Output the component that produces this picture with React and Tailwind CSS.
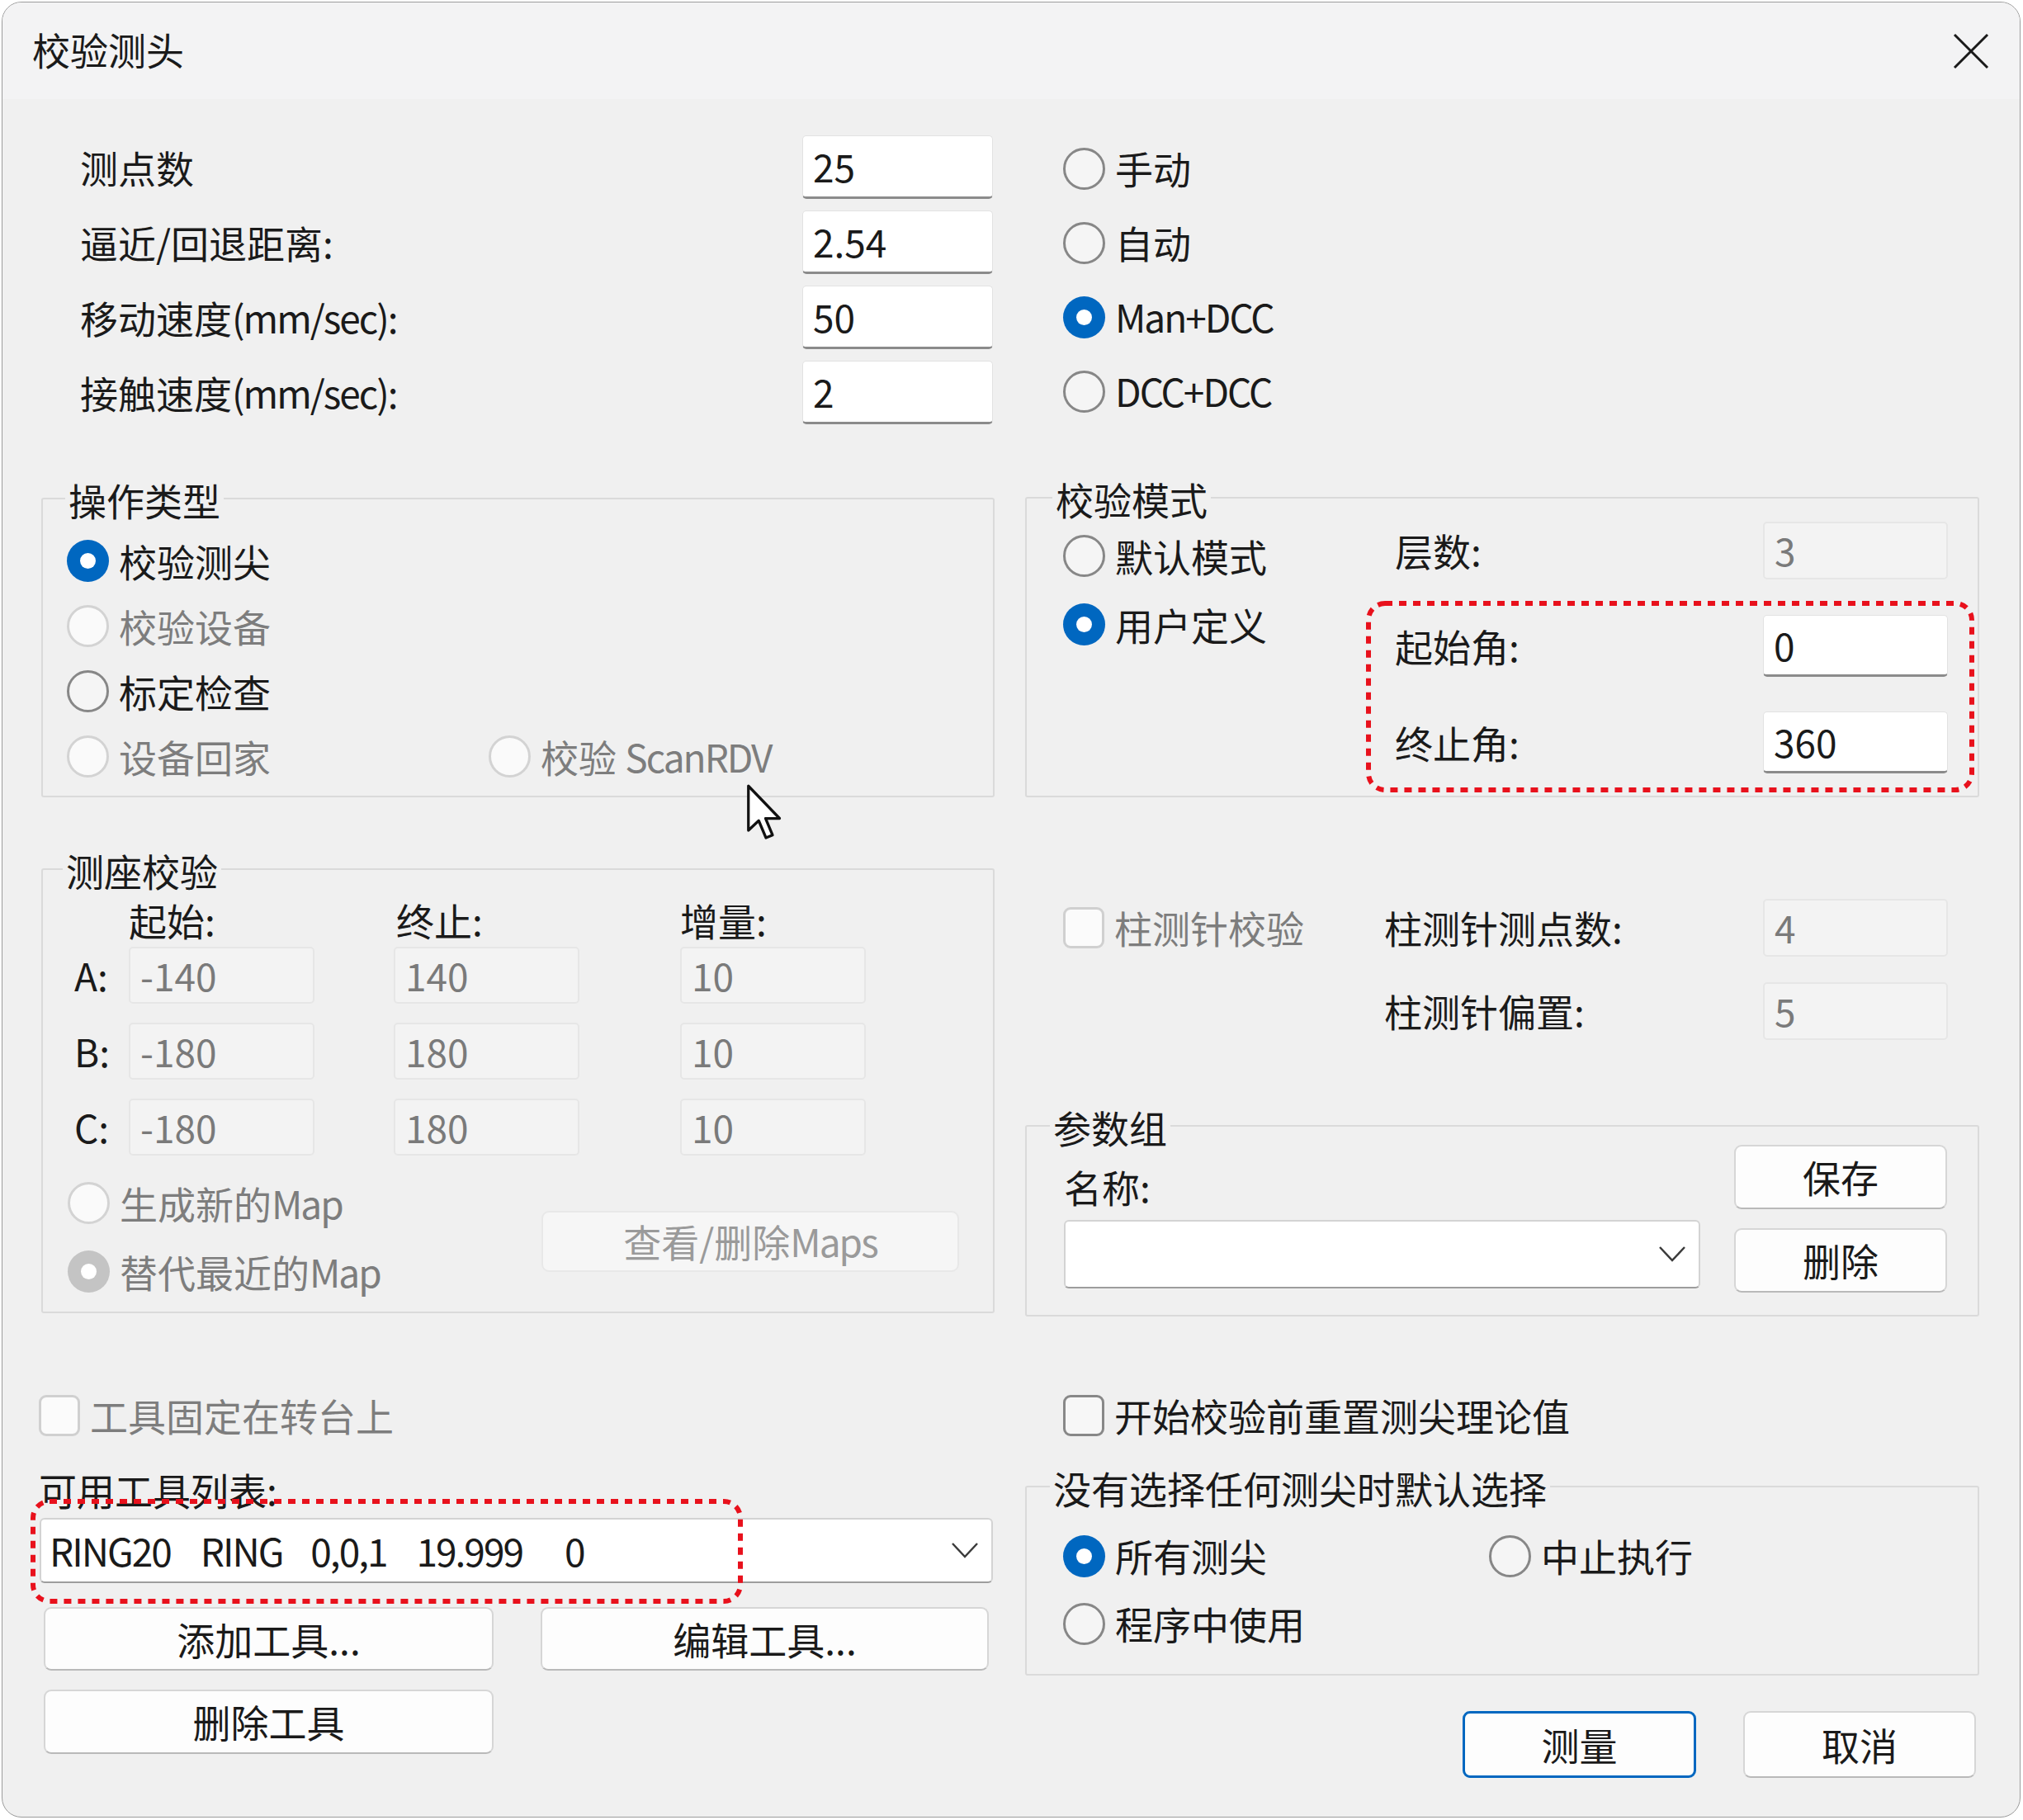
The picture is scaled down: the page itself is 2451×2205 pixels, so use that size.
import React from 'react';

// Windows 11 style "校验测头" dialog

// latin runs in the reference font are narrower than Noto's, pull them in a bit
function L({ children }) {
  return <span className="tracking-[-2px]">{children}</span>;
}

function Radio({ checked = false, disabled = false }) {
  if (checked) {
    return (
      <span
        className={`flex h-[51px] w-[51px] shrink-0 items-center justify-center rounded-full ${
          disabled ? 'bg-[#c4c4c4]' : 'bg-[#0067c0]'
        }`}
      >
        <span className="h-[19px] w-[19px] rounded-full bg-white" />
      </span>
    );
  }
  return (
    <span
      className={`h-[51px] w-[51px] shrink-0 rounded-full border-[3px] ${
        disabled ? 'border-[#d3d3d3] bg-[#fafafa]' : 'border-[#878787] bg-[#f5f5f5]'
      }`}
    />
  );
}

function Option({ text, checked, disabled }) {
  return (
    <div className="flex items-center gap-[12px]">
      <Radio checked={checked} disabled={disabled} />
      <span className={disabled ? 'text-[#7d7d7d]' : ''}>{text}</span>
    </div>
  );
}

function Check({ text, disabled = false }) {
  return (
    <div className="flex items-center gap-[12px]">
      <span
        className={`h-[50px] w-[50px] shrink-0 rounded-[9px] border-[3px] ${
          disabled ? 'border-[#d0d0d0] bg-[#fbfbfb]' : 'border-[#888888] bg-[#f7f7f7]'
        }`}
      />
      <span className={disabled ? 'text-[#7d7d7d]' : ''}>{text}</span>
    </div>
  );
}

function Field({ value, className = '' }) {
  return (
    <div
      className={`flex items-center rounded-[5px] border border-[#e2e2e2] border-b-[3px] border-b-[#8b8b8b] bg-white pl-[12px] ${className}`}
    >
      {value}
    </div>
  );
}

function OffField({ value, className = '' }) {
  return (
    <div
      className={`flex items-center rounded-[5px] border-2 border-[#e6e6e6] bg-[#f3f3f3] pl-[12px] text-[#7a7a7a] ${className}`}
    >
      {value}
    </div>
  );
}

function Btn({ children, className = '', primary = false, disabled = false }) {
  const tone = primary
    ? 'border-[3px] border-[#0067c0] bg-[#fdfdfd]'
    : disabled
    ? 'border-2 border-[#e8e8e8] bg-[#f6f6f6] text-[#9a9a9a]'
    : 'border-2 border-[#d6d6d6] border-b-[#b9b9b9] bg-[#fdfdfd]';
  return (
    <div className={`flex items-center justify-center rounded-[9px] ${tone} ${className}`}>
      {children}
    </div>
  );
}

function Chevron() {
  return (
    <svg width="34" height="21" viewBox="0 0 34 21" className="shrink-0">
      <polyline points="2,2 17,18 32,2" fill="none" stroke="#3a3a3a" strokeWidth="2.5" />
    </svg>
  );
}

function Combo({ children, className = '' }) {
  return (
    <div
      className={`flex items-center justify-between rounded-[6px] border-2 border-[#d3d3d3] border-b-[#9d9d9d] bg-white pl-[10px] pr-[15px] ${className}`}
    >
      <div className="flex items-center">{children}</div>
      <Chevron />
    </div>
  );
}

function Group({ title, titleLeft, className = '', children }) {
  return (
    <div className={`relative rounded-[3px] border-2 border-[#dadada] ${className}`}>
      <span className={`absolute -top-[28px] bg-[#f0f0f0] px-[4px] leading-[56px] ${titleLeft}`}>
        {title}
      </span>
      {children}
    </div>
  );
}

function RedMark({ w, h, className }) {
  return (
    <svg width={w} height={h} className={`pointer-events-none absolute ${className}`}>
      <rect
        x="3"
        y="3"
        width={w - 6}
        height={h - 6}
        rx="20"
        fill="none"
        stroke="#e8111c"
        strokeWidth="6"
        strokeDasharray="9 8"
      />
    </svg>
  );
}

function Cursor() {
  return (
    <svg
      width="50"
      height="76"
      viewBox="0 0 20 30"
      className="pointer-events-none absolute left-[851px] top-[343px]"
    >
      <path
        d="M1.5 1.5 L1.5 23 L6.5 18.3 L10 26.6 L13.2 25.3 L9.8 17.2 L16.6 17.2 Z"
        fill="white"
        stroke="#111"
        strokeWidth="1.3"
        strokeLinejoin="round"
      />
    </svg>
  );
}

const topRows = [
  [<>测点数</>, '25'],
  [<>逼近/回退距离:</>, '2.54'],
  [<>移动速度<L>(mm/sec):</L></>, '50'],
  [<>接触速度<L>(mm/sec):</L></>, '2'],
];

const headRows = [
  ['A:', '-140', '140', '10'],
  ['B:', '-180', '180', '10'],
  ['C:', '-180', '180', '10'],
];

export default function App() {
  return (
    <div className="h-[2205px] w-[2451px] overflow-hidden bg-white pl-[2px] pt-[2px] font-['Noto_Sans_CJK_SC',sans-serif] text-[46px] leading-[1.25] text-[#1a1a1a]">
      <div className="h-[2200px] w-[2446px] overflow-hidden rounded-[24px] border border-[#9c9c9c] bg-[#f0f0f0]">
        {/* title bar */}
        <div className="flex h-[117px] items-center justify-between bg-[#f3f3f4] pl-[36px] pr-[37px]">
          <span className="-mt-[4px]">校验测头</span>
          <svg width="44" height="44" viewBox="0 0 44 44">
            <line x1="2" y1="2" x2="42" y2="42" stroke="#1a1a1a" strokeWidth="3" />
            <line x1="42" y1="2" x2="2" y2="42" stroke="#1a1a1a" strokeWidth="3" />
          </svg>
        </div>

        <div className="flex pl-[47px]">
          {/* left column */}
          <div className="flex w-[1155px] flex-col">
            <div className="mt-[44px] flex flex-col gap-[14px]">
              {topRows.map(([label, value]) => (
                <div key={value} className="flex h-[77px] items-center justify-between">
                  <span className="pl-[47px]">{label}</span>
                  <Field value={value} className="mr-[2px] h-[77px] w-[231px]" />
                </div>
              ))}
            </div>

            <Group title="操作类型" titleLeft="left-[27px]" className="mt-[89px] h-[363px] pl-[29px] pt-[35px]">
              <div className="flex h-[79px] items-center">
                <Option text="校验测尖" checked />
              </div>
              <div className="flex h-[79px] items-center">
                <Option text="校验设备" disabled />
              </div>
              <div className="flex h-[79px] items-center">
                <Option text="标定检查" />
              </div>
              <div className="flex h-[79px] items-center">
                <div className="w-[511px]">
                  <Option text="设备回家" disabled />
                </div>
                <Option text={<>校验 <L>ScanRDV</L></>} disabled />
              </div>
              <Cursor />
            </Group>

            <Group title="测座校验" titleLeft="left-[24px]" className="mt-[86px] h-[539px] pt-[38px]">
              <div className="flex h-[46px] items-center pl-[38px]">
                <span className="w-[66px]" />
                <span className="w-[225px]">起始:</span>
                <span className="ml-[96px] w-[225px] pl-[3px]">终止:</span>
                <span className="ml-[122px] w-[225px]">增量:</span>
              </div>
              <div className="mt-[9px] flex flex-col gap-[23px]">
                {headRows.map(([axis, a, b, c]) => (
                  <div key={axis} className="flex h-[69px] items-center pl-[38px]">
                    <span className="w-[66px]">{axis}</span>
                    <OffField value={a} className="h-[69px] w-[225px]" />
                    <OffField value={b} className="ml-[96px] h-[69px] w-[225px]" />
                    <OffField value={c} className="ml-[122px] h-[69px] w-[225px]" />
                  </div>
                ))}
              </div>
              <div className="mt-[16px] flex">
                <div className="w-[604px] pl-[30px]">
                  <div className="flex h-[83px] items-center">
                    <Option text={<>生成新的<L>Map</L></>} disabled />
                  </div>
                  <div className="flex h-[83px] items-center">
                    <Option text={<>替代最近的<L>Map</L></>} checked disabled />
                  </div>
                </div>
                <Btn disabled className="mt-[51px] h-[74px] w-[506px]">
                  查看/删除<L>Maps</L>
                </Btn>
              </div>
            </Group>

            <div className="-ml-[3px] mt-[94px] flex h-[60px] items-center">
              <Check text="工具固定在转台上" disabled />
            </div>

            <div className="-ml-[3px] mt-[31px] leading-[56px]">可用工具列表:</div>

            <div className="relative -ml-[2px] mt-[7px]">
              <Combo className="h-[79px] w-[1155px]">
                <L>RING20</L>
                <span className="ml-[36px]"><L>RING</L></span>
                <span className="ml-[34px]"><L>0,0,1</L></span>
                <span className="ml-[36px]"><L>19.999</L></span>
                <span className="ml-[51px]">0</span>
              </Combo>
              <RedMark w={863} h={127} className="-left-[11px] -top-[23px]" />
            </div>

            <div className="mt-[29px] flex">
              <Btn className="ml-[3px] h-[77px] w-[545px]">添加工具...</Btn>
              <Btn className="ml-[57px] h-[77px] w-[543px]">编辑工具...</Btn>
            </div>
            <Btn className="ml-[3px] mt-[23px] h-[78px] w-[545px]">删除工具</Btn>
          </div>

          {/* right column */}
          <div className="ml-[37px] flex w-[1156px] flex-col">
            <div className="mt-[39px] flex flex-col pl-[46px]">
              <div className="flex h-[90px] items-center">
                <Option text="手动" />
              </div>
              <div className="flex h-[90px] items-center">
                <Option text="自动" />
              </div>
              <div className="flex h-[90px] items-center">
                <Option text={<L>Man+DCC</L>} checked />
              </div>
              <div className="flex h-[90px] items-center">
                <Option text={<L>DCC+DCC</L>} />
              </div>
            </div>

            <Group title="校验模式" titleLeft="left-[31px]" className="mt-[83px] flex h-[364px]">
              <div className="w-[446px] pl-[44px] pt-[28px]">
                <div className="flex h-[83px] items-center">
                  <Option text="默认模式" />
                </div>
                <div className="flex h-[83px] items-center">
                  <Option text="用户定义" checked />
                </div>
              </div>
              <div className="flex w-[670px] flex-col">
                <div className="mt-[28px] flex h-[70px] items-center justify-between">
                  <span>层数:</span>
                  <OffField value="3" className="h-[70px] w-[224px]" />
                </div>
                <div className="mt-[43px] flex h-[75px] items-center justify-between">
                  <span>起始角:</span>
                  <Field value="0" className="h-[75px] w-[224px]" />
                </div>
                <div className="mt-[42px] flex h-[75px] items-center justify-between">
                  <span>终止角:</span>
                  <Field value="360" className="h-[75px] w-[224px]" />
                </div>
              </div>
              <RedMark w={737} h={232} className="left-[411px] top-[124px]" />
            </Group>

            <div className="mt-[123px] flex h-[70px] items-center pl-[46px] pr-[38px]">
              <div className="w-[389px]">
                <Check text="柱测针校验" disabled />
              </div>
              <span className="flex-1">柱测针测点数:</span>
              <OffField value="4" className="h-[70px] w-[224px]" />
            </div>
            <div className="mt-[31px] flex h-[70px] items-center pl-[46px] pr-[38px]">
              <div className="w-[389px]" />
              <span className="flex-1">柱测针偏置:</span>
              <OffField value="5" className="h-[70px] w-[224px]" />
            </div>

            <Group title="参数组" titleLeft="left-[28px]" className="mt-[103px] flex h-[232px]">
              <div className="flex w-[857px] flex-col pl-[45px]">
                <div className="mt-[50px] flex h-[46px] items-center">名称:</div>
                <Combo className="mt-[17px] h-[83px] w-[771px]" />
              </div>
              <div className="flex flex-col">
                <Btn className="mt-[22px] h-[78px] w-[258px]">保存</Btn>
                <Btn className="mt-[23px] h-[78px] w-[258px]">删除</Btn>
              </div>
            </Group>

            <div className="mt-[90px] flex h-[60px] items-center pl-[46px]">
              <Check text="开始校验前重置测尖理论值" />
            </div>

            <Group title="没有选择任何测尖时默认选择" titleLeft="left-[28px]" className="mt-[55px] h-[230px] pl-[44px] pt-[42px]">
              <div className="flex h-[82px] items-center">
                <div className="w-[516px]">
                  <Option text="所有测尖" checked />
                </div>
                <Option text="中止执行" />
              </div>
              <div className="flex h-[82px] items-center">
                <Option text="程序中使用" />
              </div>
            </Group>

            <div className="mt-[43px] flex justify-end gap-[57px] pr-[4px]">
              <Btn primary className="h-[81px] w-[283px]">测量</Btn>
              <Btn className="h-[81px] w-[282px]">取消</Btn>
            </div>
          </div>
        </div>
      </div>
    </div>
  );
}
